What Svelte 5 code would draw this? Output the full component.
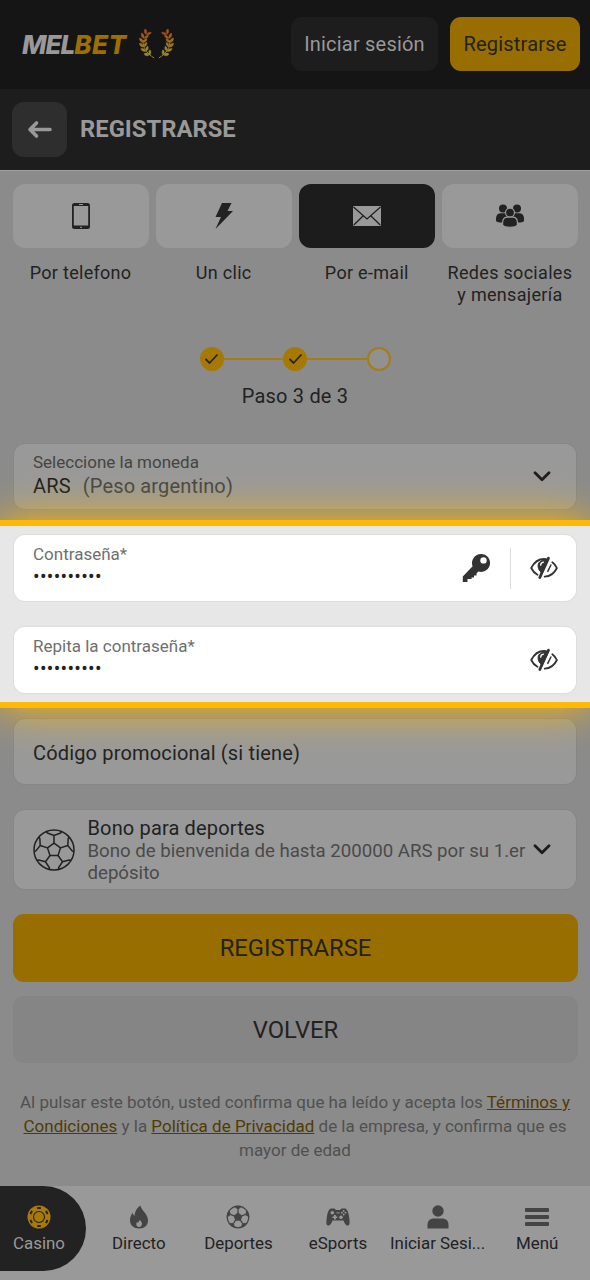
<script>
  // x, y, angle and colour of each pair of laurel leaves, bottom to top
  const leaves = [
    [11.5, 26, 10, '#9c872a'],
    [8, 22.2, 24, '#9d822a'],
    [5.8, 18, 38, '#9f7626'],
    [5, 13.6, 52, '#a06a20'],
    [5.8, 9.4, 66, '#a25b1a'],
    [8, 5.4, 80, '#a34f16'],
  ];

  const chipMarks = [0, 60, 120, 180, 240, 300];
  const spokes = [0, 72, 144, 216, 288];

  const tabs = [
    { label: 'Por telefono', icon: 'phone' },
    { label: 'Un clic', icon: 'bolt' },
    { label: 'Por e-mail', icon: 'mail', active: true },
    { label: 'Redes sociales y mensajería', icon: 'users' },
  ];

  const navItems = [
    { label: 'Casino', icon: 'chip', active: true },
    { label: 'Directo', icon: 'fire' },
    { label: 'Deportes', icon: 'ball' },
    { label: 'eSports', icon: 'gamepad' },
    { label: 'Iniciar Sesi...', icon: 'user' },
    { label: 'Menú', icon: 'menu' },
  ];
</script>

{#snippet eye()}
  <svg class="eye" width="28" height="24" viewBox="0 0 28 24" fill="none" stroke="#333" stroke-width="1.8" stroke-linecap="round">
    <path d="M7.5 18.800C4.800 17.300 2.600 15 1.200 12C4 6.500 8.800 3 14 3c1.300 0 2.500.2 3.500.5" />
    <path d="M22.300 6.200C24.200 7.600 25.800 9.500 26.900 12c-2.500 5.200-7 8.400-12.200 8.700" />
    <path d="M18.500 2.200 9.800 21.500" stroke-width="2.800" />
    <path d="M15.800 4.500C10.500 3.500 7.500 7 8.200 11c.3 2.300 1.300 4 2.900 5.300L16 6z" fill="#333" stroke-width="1" />
    <path d="M13.500 6.200c-1.700.2-2.800 1.400-2.800 3" stroke="#fff" stroke-width="1.300" />
    <path d="M20.900 9 17.800 15.400" stroke-width="1.500" />
  </svg>
{/snippet}

{#snippet chevron()}
  <svg class="chevron" width="18" height="12" viewBox="0 0 18 12" fill="none" stroke="#1c1c1c" stroke-width="2.800" stroke-linecap="round" stroke-linejoin="round">
    <path d="M2 1.700 9 8.700l7-7" />
  </svg>
{/snippet}

<main>
  <header class="header">
    <div class="logo">
      <span class="logo__text">MEL<b>BET</b></span>
      <svg width="37" height="31" viewBox="0 0 37 31">
        <defs>
          <g id="branch">
            <path d="M5.300 11C4.500 18 8 24 16.200 29" fill="none" stroke="#9d7e28" stroke-width="1" />
            {#each leaves as [x, y, angle, color]}
              <path transform="translate({x} {y}) rotate({angle - 12})" fill={color} stroke={color} stroke-width=".4" d="M0 0C-1.500-2.200-4-2.500-5.600-1.300C-4.200.8-2 1.200 0 0z" />
              <path transform="translate({x + 0.4} {y}) rotate({angle + 68})" fill={color} stroke={color} stroke-width=".4" d="M0 0C-1.500-2-3.800-2.200-5.200-1C-4 .7-2 1.200 0 0z" />
            {/each}
          </g>
        </defs>
        <use href="#branch" />
        <use href="#branch" transform="translate(37 0) scale(-1 1)" />
      </svg>
    </div>
    <div class="header__buttons">
      <button class="header__login">Iniciar sesión</button>
      <button class="header__register">Registrarse</button>
    </div>
  </header>

  <div class="title">
    <button class="title__back" aria-label="Volver">
      <svg width="26" height="20" viewBox="0 0 26 20" fill="none" stroke="#999" stroke-width="3.600" stroke-linecap="round" stroke-linejoin="round">
        <path d="M23 9.500H4M9.500 3 3 9.500l6.500 6.500" />
      </svg>
    </button>
    <h1>REGISTRARSE</h1>
  </div>

  <div class="tabs">
    {#each tabs as tab}
      <div class="tab" class:tab--active={tab.active}>
        <div class="tab__box">
          {#if tab.icon === 'phone'}
            <svg width="18" height="26" viewBox="0 0 18 26">
              <path fill="#222" fill-rule="evenodd" d="M2.500 0h13A2.500 2.500 0 0 1 18 2.500v21a2.500 2.500 0 0 1-2.500 2.500h-13A2.500 2.500 0 0 1 0 23.500v-21A2.500 2.500 0 0 1 2.500 0zM1.800 3v19.500h14.400V3z" />
              <path d="M7 1.500h4M8 24.300h2" stroke="#999" stroke-width="1" />
            </svg>
          {:else if tab.icon === 'bolt'}
            <svg width="18" height="26" viewBox="0 0 18 26">
              <path fill="#222" d="M7 0h9.500l-4 8H18L.5 26 6 14H.5z" />
            </svg>
          {:else if tab.icon === 'mail'}
            <svg width="28" height="20" viewBox="0 0 28 20">
              <rect width="28" height="20" rx="1" fill="#999" />
              <path d="M.5 1 14 13 27.500 1M.8 19 10 10M27.200 19 18 10" fill="none" stroke="#1c1c1c" stroke-width="1.200" />
            </svg>
          {:else}
            <svg width="28" height="24" viewBox="0 0 28 24" fill="#222">
              <circle cx="7" cy="4.500" r="4" />
              <circle cx="21" cy="4.500" r="4" />
              <path d="M0 17v-2.500C0 11 2 9.200 5 9.200h18c3 0 5 1.800 5 5.300V17c-1 1-3 1.500-6 1.500H6C3 18.500 1 18 0 17z" />
              <g stroke="#999" stroke-width="1.200">
                <circle cx="14" cy="8.600" r="4.500" />
                <path d="M6.600 21v-2.500c0-3.600 2-5.300 5-5.300h4.800c3 0 5 1.700 5 5.300V21c-1.500 3-13.300 3-14.800 0z" />
              </g>
            </svg>
          {/if}
        </div>
        <span class="tab__label">{tab.label}</span>
      </div>
    {/each}
  </div>

  <div class="steps">
    {#each [1, 2] as step}
      <span class="steps__dot steps__dot--done">
        <svg width="15" height="12" viewBox="0 0 15 12" fill="none" stroke="#2a2412" stroke-width="1.800">
          <path d="M1.500 6 5.500 10l8-8.500" />
        </svg>
      </span>
      <span class="steps__line"></span>
    {/each}
    <span class="steps__dot"></span>
  </div>
  <p class="steps__text">Paso 3 de 3</p>

  <div class="field field--currency">
    <div class="field__body">
      <span class="field__label">Seleccione la moneda</span>
      <span class="field__value">ARS <i>(Peso argentino)</i></span>
    </div>
    {@render chevron()}
  </div>

  <section class="highlight">
    <div class="field">
      <div class="field__body">
        <span class="field__label">Contraseña*</span>
        <span class="field__dots">••••••••••</span>
      </div>
      <svg class="key" width="28" height="28" viewBox="0 0 28 28">
        <path fill="#333" fill-rule="evenodd" d="M19 0a9 9 0 1 1-2.600 17.600L14.500 19.500V21.500H12V23.500H9.500V25H5.500V28H.8V22.500L10.600 12.300A9 9 0 0 1 19 0zM21.500 3.200a3.200 3.200 0 1 0 0 6.400a3.200 3.200 0 0 0 0-6.400z" />
      </svg>
      <span class="divider"></span>
      {@render eye()}
    </div>
    <div class="field">
      <div class="field__body">
        <span class="field__label">Repita la contraseña*</span>
        <span class="field__dots">••••••••••</span>
      </div>
      {@render eye()}
    </div>
  </section>

  <div class="field field--promo">Código promocional (si tiene)</div>

  <div class="field field--bonus">
    <svg class="bonus__ball" width="42" height="42" viewBox="-21 -21 42 42" fill="none" stroke="#222" stroke-width="1.500">
      <circle r="20" />
      <path d="M0-6.800 6.500-2.100 4 5.500H-4L-6.500-2.100z" />
      {#each spokes as angle}
        <path transform="rotate({angle})" d="M0-6.800V-14.500M-7.500-18.200-6.500-17 0-14.500 6.500-17 7.500-18.200" />
      {/each}
    </svg>
    <div class="bonus__text">
      <strong>Bono para deportes</strong>
      <span>Bono de bienvenida de hasta 200000 ARS por su 1.er depósito</span>
    </div>
    {@render chevron()}
  </div>

  <button class="submit">REGISTRARSE</button>
  <button class="submit submit--back">VOLVER</button>

  <p class="terms">
    Al pulsar este botón, usted confirma que ha leído y acepta los <a href="#terms">Términos y Condiciones</a>
    y la <a href="#privacy">Política de Privacidad</a> de la empresa, y confirma que es mayor de edad
  </p>

  <nav class="nav">
    {#each navItems as item}
      <div class="nav__item" class:nav__item--active={item.active}>
        <svg width="24" height="24" viewBox="0 0 24 24" fill="#444">
          {#if item.icon === 'chip'}
            <circle cx="12" cy="12" r="11.500" fill="#a87b08" />
            <circle cx="12" cy="12" r="5.500" fill="none" stroke="#222" stroke-width="1.100" />
            {#each chipMarks as angle}
              <rect x="10.200" y="2" width="3.600" height="2" rx=".5" fill="#222" transform="rotate({angle} 12 12)" />
            {/each}
          {:else if item.icon === 'fire'}
            <path fill-rule="evenodd" d="M13.500.5c0 4 7.500 8 7.500 15c0 4.800-3.500 8-8.700 8C7 23.500 3 20.500 3 15.300c0-3 1.200-5.500 2.700-7.500c.3 1.500.9 2.500 2 3C7.500 6.500 10.500 2.500 13.500.5zM13 15c-1.200 1-1.700 2-1.700 3l-1.300-1c-1.500 2.600-.3 5 2.100 5c3.200 0 3.900-4 .9-7z" />
          {:else if item.icon === 'ball'}
            <circle cx="12" cy="12" r="10.800" fill="none" stroke="#444" stroke-width="1.200" />
            <path d="M12 7.500 16.400 10.700 14.700 15.800H9.300L7.600 10.700z" />
            {#each spokes as angle}
              <g transform="rotate({angle} 12 12)">
                <path d="M12 8V4.500" stroke="#444" stroke-width="1.300" />
                <path d="M8 1.500 12 4.700l4-3.200C13.500.6 10.500.6 8 1.500z" />
              </g>
            {/each}
          {:else if item.icon === 'gamepad'}
            <path d="M5 3.500h3.500L10 5h4l1.500-1.500H19c2.500.6 3.500 4.500 4.200 9c.6 4.500.8 7.500-1.200 8c-2 .3-3.500-2-4.500-5h-11c-1 3-2.500 5.300-4.500 5c-2-.5-1.800-3.500-1.200-8C1.500 8 2.500 4.100 5 3.500z" />
            <g fill="#999">
              <circle cx="6.300" cy="7.800" r="1.800" />
              <circle cx="15" cy="12.200" r="1.800" />
              <path d="M8 10h1.800v1.500h1.500v1.600H9.800v1.500H8v-1.500H6.500v-1.600H8z" />
              <circle cx="17.700" cy="5.900" r=".9" />
              <circle cx="17.700" cy="9.500" r=".9" />
              <circle cx="15.900" cy="7.700" r=".9" />
              <circle cx="19.500" cy="7.700" r=".9" />
              <rect x="10.500" y="7.400" width="3" height="1" />
            </g>
          {:else if item.icon === 'user'}
            <circle cx="12" cy="6" r="5.700" />
            <path d="M1.500 23.500V20c0-4.500 2.500-6.600 6.500-6.600h8c4 0 6.500 2.100 6.500 6.600v3.500z" />
          {:else}
            <rect y="3" width="24" height="4" rx="1" />
            <rect y="10" width="24" height="4" rx="1" />
            <rect y="17" width="24" height="4" rx="1" />
          {/if}
        </svg>
        <span>{item.label}</span>
      </div>
    {/each}
  </nav>
</main>

<style>
  :global(body) {
    background-color: #8b8b8b;
  }
  * {
    box-sizing: border-box;
  }
  main {
    width: 590px;
    height: 1280px;
    overflow: hidden;
    display: flex;
    flex-direction: column;
    background-color: #8b8b8b;
    color: #222;
    font-family: Roboto, sans-serif;
  }
  svg {
    display: block;
    flex: none;
  }
  button {
    border: none;
    padding: 0;
    font-family: inherit;
    cursor: pointer;
  }

  .header {
    flex: none;
    height: 89px;
    padding: 0 10px 0 22px;
    display: flex;
    align-items: center;
    justify-content: space-between;
    background-color: #151515;
  }
  .logo {
    display: flex;
    align-items: center;
    gap: 9px;
  }
  .logo__text {
    width: 107px;
    color: #999;
    font-family: Inter, sans-serif;
    font-size: 26px;
    font-style: italic;
    font-weight: 800;
    letter-spacing: -1px;
    line-height: 30px;
  }
  .logo__text b {
    color: #9c7000;
    font-weight: 800;
    letter-spacing: 0.4px;
  }
  .header__buttons {
    padding-bottom: 1px;
    display: flex;
    gap: 12px;
  }
  .header__login,
  .header__register {
    width: 147px;
    height: 54px;
    border-radius: 11px;
    background-color: #1d1d1d;
    color: #999;
    font-size: 20px;
    letter-spacing: 0.2px;
  }
  .header__register {
    width: 130px;
    background-color: #996e00;
    color: #222;
  }

  .title {
    flex: none;
    height: 82px;
    padding: 0 12px;
    border-bottom: 1px solid #a2a2a2;
    display: flex;
    align-items: center;
    gap: 13px;
    background-color: #1d1d1d;
  }
  .title__back {
    width: 55px;
    height: 55px;
    border-radius: 12px;
    display: flex;
    align-items: center;
    justify-content: center;
    background-color: #2e2e2e;
  }
  h1 {
    margin: 0;
    padding-bottom: 2px;
    color: #999;
    font-size: 23.800px;
    font-weight: 700;
  }

  .tabs {
    height: 135px;
    padding: 13px 12px 0 12.500px;
    display: grid;
    grid-template-columns: repeat(4, 1fr);
    gap: 7px;
  }
  .tab {
    display: flex;
    flex-direction: column;
    align-items: center;
  }
  .tab__box {
    width: 100%;
    height: 64px;
    border-radius: 12px;
    display: flex;
    align-items: center;
    justify-content: center;
    background-color: #999;
  }
  .tab--active .tab__box {
    background-color: #1c1c1c;
  }
  .tab__label {
    width: 130px;
    margin-top: 14px;
    font-size: 18px;
    line-height: 22px;
    letter-spacing: 0.3px;
    text-align: center;
  }

  .steps {
    margin-top: 41px;
    display: flex;
    align-items: center;
    justify-content: center;
  }
  .steps__dot {
    width: 24px;
    height: 24px;
    border: 2px solid #a67c14;
    border-radius: 50%;
    display: flex;
    align-items: center;
    justify-content: center;
    background-color: #919191;
  }
  .steps__dot--done {
    border-color: #a67905;
    background-color: #a67905;
  }
  .steps__line {
    width: 59.500px;
    height: 2px;
    background-color: #a67c14;
  }
  .steps__text {
    margin: 13px 0 0;
    font-size: 20px;
    line-height: 24px;
    letter-spacing: 0.2px;
    text-align: center;
  }

  .field {
    flex: none;
    height: 66px;
    margin: 0 14px;
    padding: 0 17px 0 19px;
    border-radius: 11px;
    display: flex;
    align-items: center;
    background-color: #999;
    box-shadow: 0 0 0 1px #868686;
  }
  .field--currency {
    height: 65px;
    margin-top: 36px;
  }
  .field__body {
    flex: 1;
    padding-bottom: 5px;
    display: flex;
    flex-direction: column;
  }
  .field--currency .field__body {
    padding-bottom: 3px;
  }
  .field__label {
    color: #444;
    font-size: 17px;
    line-height: 22px;
  }
  .field__value {
    font-size: 20px;
    line-height: 26px;
    letter-spacing: 0.15px;
    color: #1c1c1c;
  }
  .field__value i {
    margin-left: 7px;
    color: #444;
    font-style: normal;
  }
  .chevron {
    margin-right: 8px;
  }

  .highlight {
    position: relative;
    z-index: 1;
    flex: none;
    height: 188px;
    margin-top: 11px;
    padding-top: 9px;
    border: solid #ffb805;
    border-width: 6px 0;
    display: flex;
    flex-direction: column;
    gap: 26px;
    background-color: #e7e7e7;
    box-shadow: 0 0 40px #ffb805;
  }
  .highlight .field {
    padding-right: 18px;
    background-color: #fff;
    box-shadow: 0 0 0 1px #ddd;
  }
  .highlight .field__label {
    color: #6f6f6f;
  }
  .field__dots {
    height: 23px;
    color: #222;
    font-size: 19.500px;
    line-height: 24px;
    letter-spacing: 0.300px;
  }
  .divider {
    width: 1px;
    height: 41px;
    margin: 0 19px 0 20px;
    background-color: #ddd;
  }

  .field--promo {
    height: 65px;
    margin-top: 11px;
    padding-top: 2px;
    font-size: 20px;
    letter-spacing: 0.160px;
  }
  .field--bonus {
    height: 79px;
    margin-top: 26px;
  }
  .field--bonus .chevron {
    margin-left: -8px;
  }
  .bonus__text {
    flex: 1;
    margin-left: 12.500px;
    padding-top: 2px;
    display: flex;
    flex-direction: column;
  }
  .bonus__text strong {
    font-size: 20px;
    font-weight: 400;
    letter-spacing: 0.150px;
    line-height: 23px;
  }
  .bonus__text span {
    color: #4a4a4a;
    font-size: 18.650px;
    line-height: 22px;
  }

  .submit {
    flex: none;
    height: 68px;
    margin: 25px 12px 0 13px;
    border-radius: 11px;
    background-color: #996e00;
    color: #222;
    font-size: 23.800px;
  }
  .submit--back {
    height: 67px;
    margin-top: 14px;
    background-color: #858585;
  }

  .terms {
    margin: 27px 14px 0;
    color: #505050;
    font-size: 17px;
    line-height: 24px;
    text-align: center;
  }
  .terms a {
    color: #513b00;
    text-decoration: underline;
  }

  .nav {
    flex: none;
    height: 94px;
    margin-top: auto;
    padding-right: 3px;
    display: grid;
    grid-template-columns: 89px repeat(5, 1fr);
    background-color: #999;
  }
  .nav__item {
    height: 85px;
    padding-top: 19px;
    display: flex;
    flex-direction: column;
    align-items: center;
    gap: 4px;
    font-size: 16.900px;
    line-height: 20px;
  }
  .nav__item--active {
    width: 86px;
    padding-right: 8px;
    border-radius: 0 43px 43px 0;
    background-color: #222;
    color: #999;
  }
</style>
